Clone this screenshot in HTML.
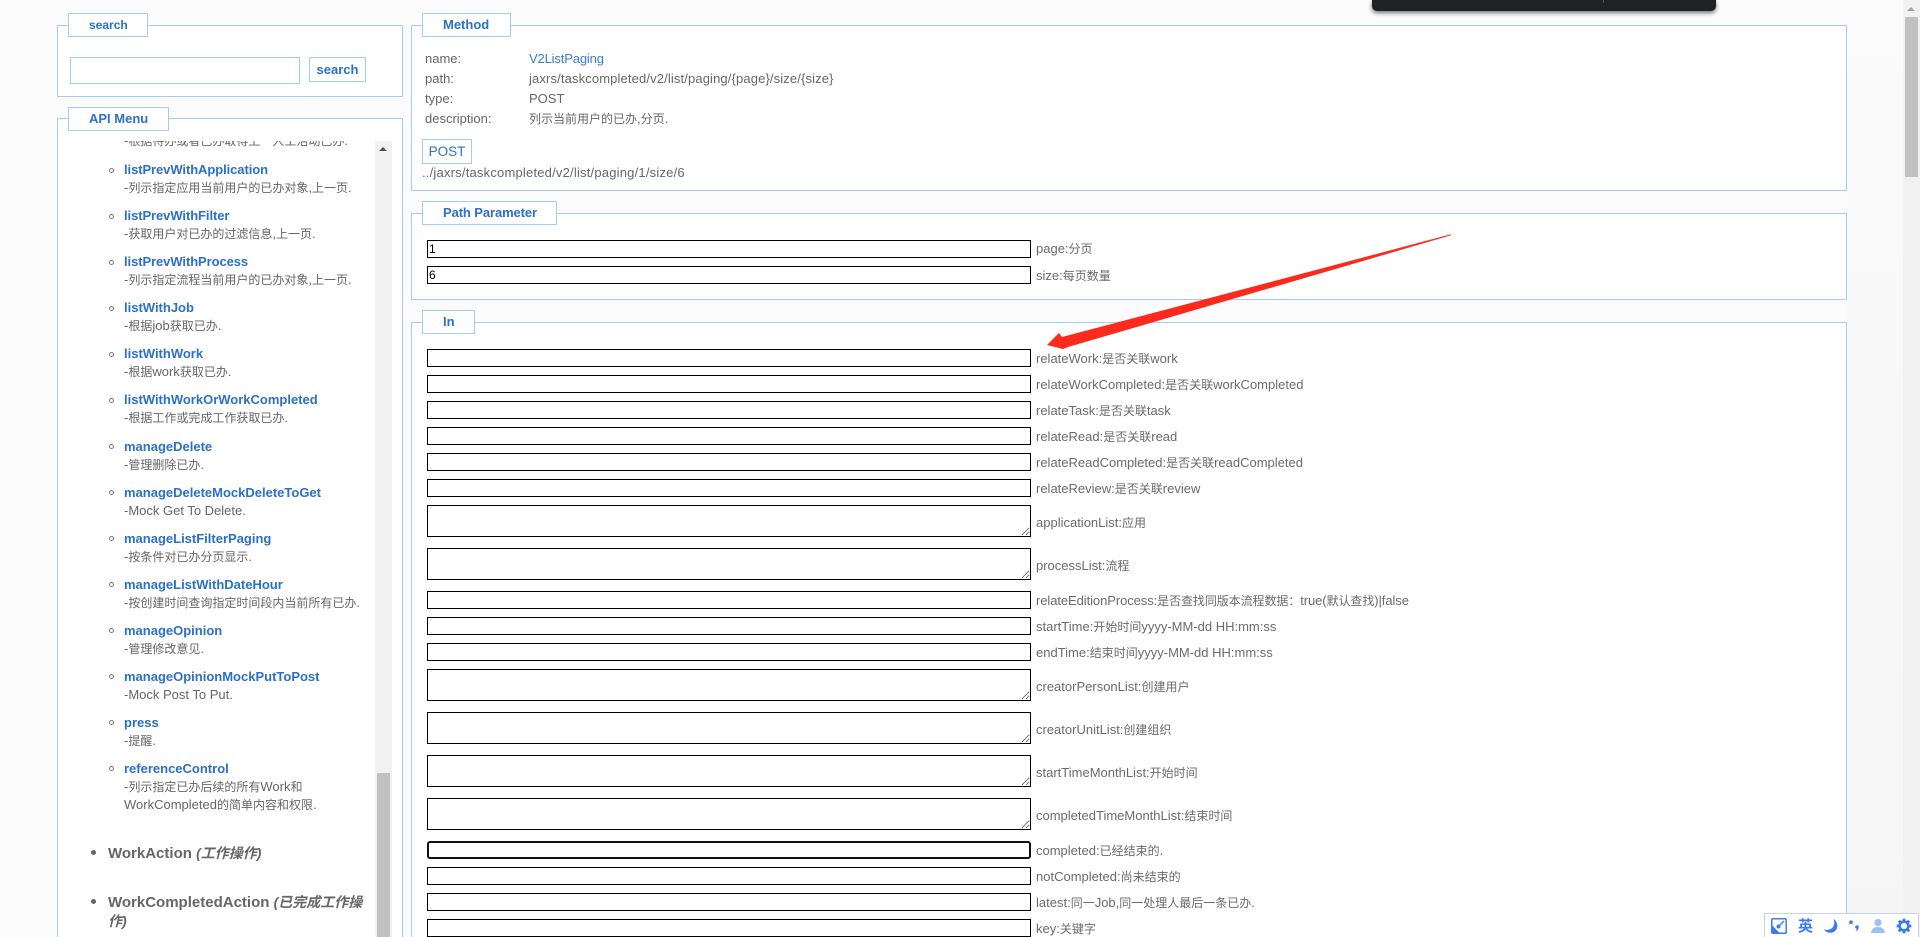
<!DOCTYPE html>
<html lang="zh">
<head>
<meta charset="utf-8">
<title>API</title>
<style>
html,body{margin:0;padding:0;width:1920px;height:937px;overflow:hidden;background:#fbfbfb}
body{position:relative;font:13px/20px "Liberation Sans","Noto Sans CJK SC",sans-serif;color:#666}
i{font-style:normal;font-size:12px}
.a{position:absolute;white-space:nowrap}
.p{position:absolute;box-sizing:border-box;background:#fff;border:1px solid #a3cdf5}
.lg{position:absolute;box-sizing:border-box;height:24px;background:#fff;border:1px solid #a3cdf5;color:#2b70c9;font-weight:bold;line-height:22px;padding-left:20px;white-space:nowrap}
input,textarea{position:absolute;box-sizing:border-box;margin:0;left:427px;width:604px;height:18px;border:1px solid #000;border-radius:0;padding:0 1px;background:#fff;font:12px "Liberation Sans",sans-serif;color:#000;outline:none}
textarea{height:32px;resize:both;display:block}
.f{border:2px solid #111;border-radius:3px}
.l{position:absolute;left:1036px;white-space:nowrap;line-height:20px;color:#6b6b6b}
.t{position:absolute;left:124px;white-space:nowrap;font-weight:bold;color:#2b70c9}
.d{position:absolute;left:124px;white-space:nowrap}
.o{position:absolute;left:108.5px;width:5px;height:5px;box-sizing:border-box;border:1px solid #777;border-radius:50%}
.b{position:absolute;left:90.5px;width:5px;height:5px;background:#666;border-radius:50%}
.h{position:absolute;left:108px;white-space:nowrap;font-size:15px;font-weight:bold;color:#666}
.h i{font-size:14px;font-style:italic}
</style>
</head>
<body>

<!-- search panel -->
<div class="p" style="left:57px;top:25px;width:346px;height:72px"></div>
<div class="lg" style="left:68px;top:13px;width:80px;font-size:12px">search</div>
<div class="a" style="left:70px;top:57px;width:230px;height:27px;box-sizing:border-box;border:1px solid #a3cdf5;background:#fff"></div>
<div class="a" style="left:309px;top:57px;width:57px;height:25px;box-sizing:border-box;border:1px solid #a3cdf5;background:#fff;color:#2b70c9;font-weight:bold;line-height:23px;text-align:center;font-size:13px">search</div>

<!-- API menu panel -->
<div class="p" style="left:57px;top:118px;width:346px;height:819px;border-bottom:none"></div>
<div class="lg" style="left:68px;top:107px;width:101px">API Menu</div>
<div class="a" style="left:58px;top:141px;width:317px;height:796px;overflow:hidden">
  <div style="position:absolute;left:-58px;top:-141px;width:400px;height:937px">
    <div class="d" style="top:131px"><span>-</span><i>根据待办或者已办取得上一人工活动已办</i>.</div>

    <div class="o" style="top:168px"></div><div class="t" style="top:160px;letter-spacing:-.08px">listPrevWithApplication</div>
    <div class="d" style="top:178px">-<i>列示指定应用当前用户的已办对象</i>,<i>上一页</i>.</div>

    <div class="o" style="top:214px"></div><div class="t" style="top:206px;letter-spacing:-.08px">listPrevWithFilter</div>
    <div class="d" style="top:224px">-<i>获取用户对已办的过滤信息</i>,<i>上一页</i>.</div>

    <div class="o" style="top:260px"></div><div class="t" style="top:252px;letter-spacing:-.08px">listPrevWithProcess</div>
    <div class="d" style="top:270px">-<i>列示指定流程当前用户的已办对象</i>,<i>上一页</i>.</div>

    <div class="o" style="top:306px"></div><div class="t" style="top:298px">listWithJob</div>
    <div class="d" style="top:316px">-<i>根据</i>job<i>获取已办</i>.</div>

    <div class="o" style="top:352px"></div><div class="t" style="top:344px">listWithWork</div>
    <div class="d" style="top:362px">-<i>根据</i>work<i>获取已办</i>.</div>

    <div class="o" style="top:398px"></div><div class="t" style="top:390px">listWithWorkOrWorkCompleted</div>
    <div class="d" style="top:408px">-<i>根据工作或完成工作获取已办</i>.</div>

    <div class="o" style="top:444px"></div><div class="t" style="top:437px">manageDelete</div>
    <div class="d" style="top:455px">-<i>管理删除已办</i>.</div>

    <div class="o" style="top:490px"></div><div class="t" style="top:483px">manageDeleteMockDeleteToGet</div>
    <div class="d" style="top:501px">-Mock Get To Delete.</div>

    <div class="o" style="top:536px"></div><div class="t" style="top:529px">manageListFilterPaging</div>
    <div class="d" style="top:547px">-<i>按条件对已办分页显示</i>.</div>

    <div class="o" style="top:582px"></div><div class="t" style="top:575px">manageListWithDateHour</div>
    <div class="d" style="top:593px">-<i>按创建时间查询指定时间段内当前所有已办</i>.</div>

    <div class="o" style="top:628px"></div><div class="t" style="top:621px">manageOpinion</div>
    <div class="d" style="top:639px">-<i>管理修改意见</i>.</div>

    <div class="o" style="top:674px"></div><div class="t" style="top:667px">manageOpinionMockPutToPost</div>
    <div class="d" style="top:685px">-Mock Post To Put.</div>

    <div class="o" style="top:720px"></div><div class="t" style="top:713px">press</div>
    <div class="d" style="top:731px">-<i>提醒</i>.</div>

    <div class="o" style="top:766px"></div><div class="t" style="top:759px">referenceControl</div>
    <div class="d" style="top:777px">-<i>列示指定已办后续的所有</i>Work<i>和</i></div>
    <div class="d" style="top:795px">WorkCompleted<i>的简单内容和权限</i>.</div>

    <div class="b" style="top:850px"></div><div class="h" style="top:843px">WorkAction <i>(工作操作)</i></div>
    <div class="b" style="top:899px"></div><div class="h" style="top:892px">WorkCompletedAction <i>(已完成工作操</i></div>
    <div class="h" style="top:911px"><i>作)</i></div>
  </div>
</div>
<!-- menu scrollbar -->
<div class="a" style="left:375px;top:141px;width:17px;height:796px;background:#f1f1f1"></div>
<div class="a" style="left:377px;top:773px;width:13px;height:164px;background:#c1c1c1"></div>
<svg class="a" style="left:379px;top:146px" width="8" height="6"><path d="M4 1 L8 5 H0Z" fill="#505050"/></svg>

<!-- Method panel -->
<div class="p" style="left:411px;top:25px;width:1436px;height:166px"></div>
<div class="lg" style="left:422px;top:13px;width:89px">Method</div>
<div class="a" style="left:425px;top:49px">name:</div>
<div class="a" style="left:425px;top:69px">path:</div>
<div class="a" style="left:425px;top:89px">type:</div>
<div class="a" style="left:425px;top:109px">description:</div>
<div class="a" style="left:529px;top:49px;color:#3a7bd5;letter-spacing:-.15px">V2ListPaging</div>
<div class="a" style="left:529px;top:69px;letter-spacing:.13px">jaxrs/taskcompleted/v2/list/paging/{page}/size/{size}</div>
<div class="a" style="left:529px;top:89px">POST</div>
<div class="a" style="left:529px;top:109px"><i>列示当前用户的已办</i>,<i>分页</i>.</div>
<div class="a" style="left:422px;top:139px;width:50px;height:25px;box-sizing:border-box;border:1px solid #a3cdf5;background:#fff;color:#2b70c9;font-size:13.5px;line-height:23px;text-align:center">POST</div>
<div class="a" style="left:422px;top:163px;letter-spacing:.2px">../jaxrs/taskcompleted/v2/list/paging/1/size/6</div>

<!-- Path Parameter -->
<div class="p" style="left:411px;top:213px;width:1436px;height:87px"></div>
<div class="lg" style="left:422px;top:201px;width:135px;letter-spacing:-.1px">Path Parameter</div>
<input style="top:240px" value="1">
<input style="top:266px" value="6">
<div class="l" style="top:239px">page:<i>分页</i></div>
<div class="l" style="top:266px">size:<i>每页数量</i></div>

<!-- In -->
<div class="p" style="left:411px;top:322px;width:1436px;height:615px;border-bottom:none"></div>
<div class="lg" style="left:422px;top:310px;width:53px">In</div>

<input style="top:349px"><div class="l" style="top:349px">relateWork:<i>是否关联</i>work</div>
<input style="top:375px"><div class="l" style="top:375px">relateWorkCompleted:<i>是否关联</i>workCompleted</div>
<input style="top:401px"><div class="l" style="top:401px">relateTask:<i>是否关联</i>task</div>
<input style="top:427px"><div class="l" style="top:427px">relateRead:<i>是否关联</i>read</div>
<input style="top:453px"><div class="l" style="top:453px">relateReadCompleted:<i>是否关联</i>readCompleted</div>
<input style="top:479px"><div class="l" style="top:479px">relateReview:<i>是否关联</i>review</div>
<textarea style="top:505px"></textarea><div class="l" style="top:513px">applicationList:<i>应用</i></div>
<textarea style="top:548px"></textarea><div class="l" style="top:556px">processList:<i>流程</i></div>
<input style="top:591px"><div class="l" style="top:591px;letter-spacing:-.08px">relateEditionProcess:<i>是否查找同版本流程数据：</i>true(<i>默认查找</i>)|false</div>
<input style="top:617px"><div class="l" style="top:617px">startTime:<i>开始时间</i>yyyy-MM-dd HH:mm:ss</div>
<input style="top:643px"><div class="l" style="top:643px">endTime:<i>结束时间</i>yyyy-MM-dd HH:mm:ss</div>
<textarea style="top:669px"></textarea><div class="l" style="top:677px">creatorPersonList:<i>创建用户</i></div>
<textarea style="top:712px"></textarea><div class="l" style="top:720px">creatorUnitList:<i>创建组织</i></div>
<textarea style="top:755px"></textarea><div class="l" style="top:763px">startTimeMonthList:<i>开始时间</i></div>
<textarea style="top:798px"></textarea><div class="l" style="top:806px">completedTimeMonthList:<i>结束时间</i></div>
<input class="f" style="top:841px"><div class="l" style="top:841px">completed:<i>已经结束的</i>.</div>
<input style="top:867px"><div class="l" style="top:867px">notCompleted:<i>尚未结束的</i></div>
<input style="top:893px"><div class="l" style="top:893px">latest:<i>同一</i>Job,<i>同一处理人最后一条已办</i>.</div>
<input style="top:919px"><div class="l" style="top:921px;line-height:16px">key:<i>关键字</i></div>

<!-- red arrow -->
<svg class="a" style="left:0;top:0;pointer-events:none" width="1920" height="937">
  <polygon points="1451,234.3 1062,337 1059,333 1047,345 1063,349 1068,347 1451,235.3" fill="#fb2a1c"/>
</svg>

<!-- right strip -->
<div class="a" style="left:1847px;top:0;width:56px;height:937px;background:linear-gradient(#fbfbfb,#f5f5f5)"></div>
<!-- page scrollbar -->
<div class="a" style="left:1903px;top:0;width:17px;height:937px;background:#f1f1f1"></div>
<div class="a" style="left:1905px;top:17px;width:13px;height:160px;background:#c1c1c1"></div>
<svg class="a" style="left:1907px;top:6px" width="8" height="6"><path d="M4 1 L8 5 H0Z" fill="#a3a3a3"/></svg>

<!-- black popup -->
<div class="a" style="left:1372px;top:0;width:344px;height:11px;background:#202124;border-radius:0 0 5px 5px;box-shadow:0 2px 4px rgba(0,0,0,.55)"></div>
<div class="a" style="left:1603px;top:0;width:1px;height:3px;background:#555"></div>

<!-- toolbar -->
<div class="a" style="left:1764px;top:913px;width:155px;height:24px;box-sizing:border-box;background:#fff;border:1px solid #c5d3ea;border-bottom:none"></div>
<svg class="a" style="left:1771px;top:918px" width="16" height="16" viewBox="0 0 16 16">
  <path d="M0.8 7 L9 15.2 H0.8Z" fill="#3a7bf0"/>
  <rect x=".8" y=".8" width="14.4" height="14.4" rx="1.2" fill="none" stroke="#3a7bf0" stroke-width="1.5"/>
  <path d="M8 8 L13 3" stroke="#3a7bf0" stroke-width="1.3"/>
  <circle cx="7.5" cy="8.5" r="2" fill="#3a7bf0"/>
</svg>
<div class="a" style="left:1798px;top:916px;font:bold 15px/20px 'Noto Sans CJK SC',sans-serif;color:#3a7bf0">英</div>
<svg class="a" style="left:1823px;top:918px" width="16" height="16" viewBox="0 0 16 16">
  <path d="M10.5 1 C14.5 3.5 15.5 8.5 13 12 C10 16 3.5 15.5 1 11.5 C5 12.5 9 11.5 10.5 8 C11.5 5.5 11.5 3 10.5 1Z" fill="#3a7bf0"/>
</svg>
<svg class="a" style="left:1848px;top:918px" width="14" height="16" viewBox="0 0 14 16">
  <circle cx="3" cy="4.2" r="1.8" fill="#3a7bf0"/>
  <circle cx="9" cy="9" r="1.8" fill="#3a7bf0"/>
  <path d="M10.6 9 C10.8 11 9.8 12.4 8 13.4 C8.6 12 8.6 11 8.6 10.5Z" fill="#3a7bf0"/>
</svg>
<svg class="a" style="left:1870px;top:918px" width="16" height="16" viewBox="0 0 16 16">
  <circle cx="8" cy="4.6" r="3.6" fill="#9dbff5"/>
  <path d="M1 15 C1.5 10.5 4.5 9 8 9 C11.5 9 14.5 10.5 15 15Z" fill="#9dbff5"/>
</svg>
<svg class="a" style="left:1896px;top:918px" width="16" height="16" viewBox="0 0 16 16">
  <circle cx="8" cy="8" r="4.4" fill="none" stroke="#3a7bf0" stroke-width="2.6"/>
  <g stroke="#3a7bf0" stroke-width="2.8">
    <path d="M8 .6 V3.5 M8 12.5 V15.4 M.6 8 H3.5 M12.5 8 H15.4 M2.8 2.8 L4.8 4.8 M11.2 11.2 L13.2 13.2 M2.8 13.2 L4.8 11.2 M11.2 4.8 L13.2 2.8"/>
  </g>
</svg>

</body>
</html>
